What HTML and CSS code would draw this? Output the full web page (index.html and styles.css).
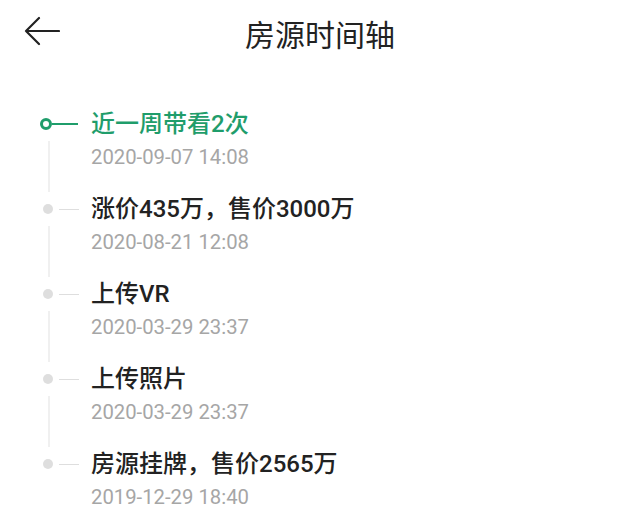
FILE: index.html
```html
<!DOCTYPE html>
<html lang="zh-CN">
<head>
    <meta charset="UTF-8">
    <meta name="viewport" content="width=device-width, initial-scale=1.0">
    <title>房源时间轴</title>
    <link rel="stylesheet" href="styles.css">
</head>
<body>
    <div class="header">
        <a class="back" href="#">
            <svg width="36" height="30" viewBox="0 0 36 30">
                <path d="M2 15 H35 M15 2 L2 15 L15 28" fill="none" stroke="#222" stroke-width="2.2" stroke-linecap="round" stroke-linejoin="round"/>
            </svg>
        </a>
        <h1>房源时间轴</h1>
    </div>

    <ul class="timeline">
        <li class="item active">
            <div class="marker">
                <div class="head"><span class="dot"></span><span class="dash"></span></div>
                <div class="line"></div>
            </div>
            <div class="content">
                <div class="title">近一周带看2次</div>
                <div class="date">2020-09-07 14:08</div>
            </div>
        </li>
        <li class="item">
            <div class="marker">
                <div class="head"><span class="dot"></span><span class="dash"></span></div>
                <div class="line"></div>
            </div>
            <div class="content">
                <div class="title">涨价435万，售价3000万</div>
                <div class="date">2020-08-21 12:08</div>
            </div>
        </li>
        <li class="item">
            <div class="marker">
                <div class="head"><span class="dot"></span><span class="dash"></span></div>
                <div class="line"></div>
            </div>
            <div class="content">
                <div class="title">上传VR</div>
                <div class="date">2020-03-29 23:37</div>
            </div>
        </li>
        <li class="item">
            <div class="marker">
                <div class="head"><span class="dot"></span><span class="dash"></span></div>
                <div class="line"></div>
            </div>
            <div class="content">
                <div class="title">上传照片</div>
                <div class="date">2020-03-29 23:37</div>
            </div>
        </li>
        <li class="item">
            <div class="marker">
                <div class="head"><span class="dot"></span><span class="dash"></span></div>
                <div class="line"></div>
            </div>
            <div class="content">
                <div class="title">房源挂牌，售价2565万</div>
                <div class="date">2019-12-29 18:40</div>
            </div>
        </li>
    </ul>
</body>
</html>
```

FILE: styles.css
```css
body {
    margin: 0;
    background: #fff;
    font-family: Roboto, "Noto Sans CJK SC", sans-serif;
    color: #222;
    overflow: hidden;
}
.header {
    height: 66px;
    display: flex;
    align-items: center;
    justify-content: center;
    position: relative;
}
.header h1 {
    margin: 0;
    font-size: 30px;
    font-weight: 400;
    color: #222;
}
.back {
    position: absolute;
    left: 24px;
    top: 16px;
    display: block;
    line-height: 0;
}
.timeline {
    list-style: none;
    margin: 0;
    padding: 43px 0 0;
}
.item {
    display: flex;
    height: 85px;
}
.marker {
    width: 91px;
    padding-left: 40px;
    box-sizing: border-box;
    display: flex;
    flex-direction: column;
}
.head {
    height: 30px;
    display: flex;
    align-items: center;
}
.dot {
    width: 10px;
    height: 10px;
    margin: 0 6px 0 3px;
    border-radius: 50%;
    background: #dedede;
}
.dash {
    width: 20px;
    height: 1px;
    background: #dedede;
}
.active .dot {
    width: 12px;
    height: 12px;
    margin: 0;
    box-sizing: border-box;
    border: 3px solid #1f9d6b;
    background: #fff;
}
.active .dash {
    width: 26px;
    height: 2px;
    background: #1f9d6b;
}
.line {
    flex: 1;
    width: 2px;
    margin: 2px 0 2px 8px;
    background: #f0f0f0;
}
.item:last-child .line {
    visibility: hidden;
}
.title {
    font-size: 24px;
    line-height: 30px;
    font-weight: 500;
    color: #222;
    white-space: nowrap;
}
.active .title {
    color: #1f9d6b;
}
.date {
    margin-top: 5px;
    font-size: 20.3px;
    line-height: 26px;
    color: #a6a6a6;
}
```
